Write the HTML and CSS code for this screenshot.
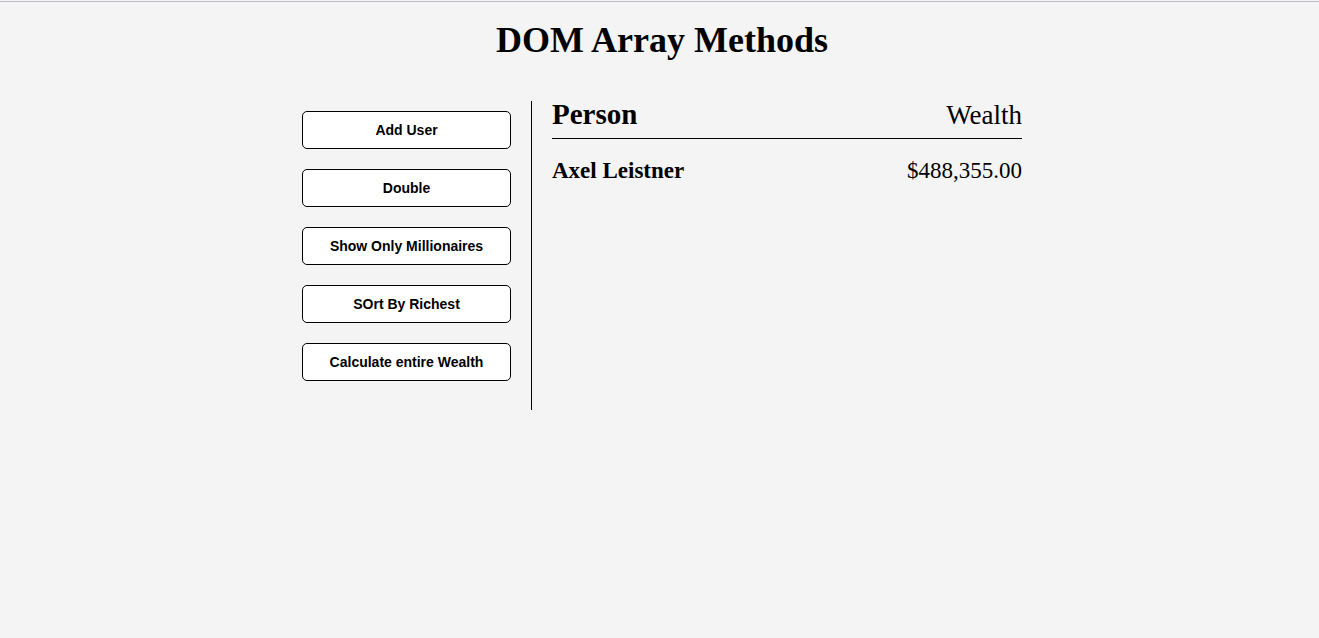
FILE: index.html
```html
<!DOCTYPE html>
<html>
  <head>
    <title>DOM Array Methods</title>
    <link rel="stylesheet" href="styles.css">
  </head>
  <body>
    <div class="top-line"></div>
    <h1>DOM Array Methods</h1>

    <div class="container">
      <aside class="sidebar">
        <button class="action-button">Add User</button>
        <button class="action-button">Double</button>
        <button class="action-button">Show Only Millionaires</button>
        <button class="action-button">SOrt By Richest</button>
        <button class="action-button">Calculate entire Wealth</button>
      </aside>

      <main class="main">
        <div class="main-header">
          <strong class="person-title">Person</strong>
          <span class="wealth-title">Wealth</span>
        </div>
        <div class="person">
          <strong>Axel Leistner</strong>
          <span>$488,355.00</span>
        </div>
      </main>
    </div>
  </body>
</html>
```

FILE: styles.css
```css
body {
  background-color: #f4f4f4;
  font-family: "Liberation Serif", Georgia, serif;
  color: black;
  margin: 0;
  padding: 0 0 0 5px;
}

.top-line {
  height: 1px;
  margin-top: 1px;
  margin-left: -5px;
  background-color: #b7bdc3;
}

h1 {
  font-size: 36px;
  line-height: 36px;
  text-align: center;
  margin: 20px 0 0 0;
}

.container {
  display: flex;
  width: 720px;
  margin: 43px auto 0 auto;
}

.sidebar {
  width: 209px;
  padding: 10px 20px 9px 0;
  border-right: 1px solid black;
}

.action-button {
  display: block;
  width: 209px;
  height: 38px;
  box-sizing: border-box;
  background-color: white;
  border: 1px solid black;
  border-radius: 5px;
  font-family: "Liberation Sans", Arial, sans-serif;
  font-size: 14px;
  font-weight: bold;
  color: black;
  margin-bottom: 20px;
  cursor: pointer;
}

.main {
  width: 470px;
  padding-left: 20px;
}

.main-header {
  display: flex;
  justify-content: space-between;
  align-items: baseline;
  line-height: 24px;
  padding: 1px 0 11px 0;
  border-bottom: 1px solid black;
}

.person-title {
  font-size: 29px;
}

.wealth-title {
  font-size: 27px;
}

.person {
  display: flex;
  justify-content: space-between;
  align-items: baseline;
  font-size: 23px;
  line-height: 24px;
  margin-top: 20px;
}
```
